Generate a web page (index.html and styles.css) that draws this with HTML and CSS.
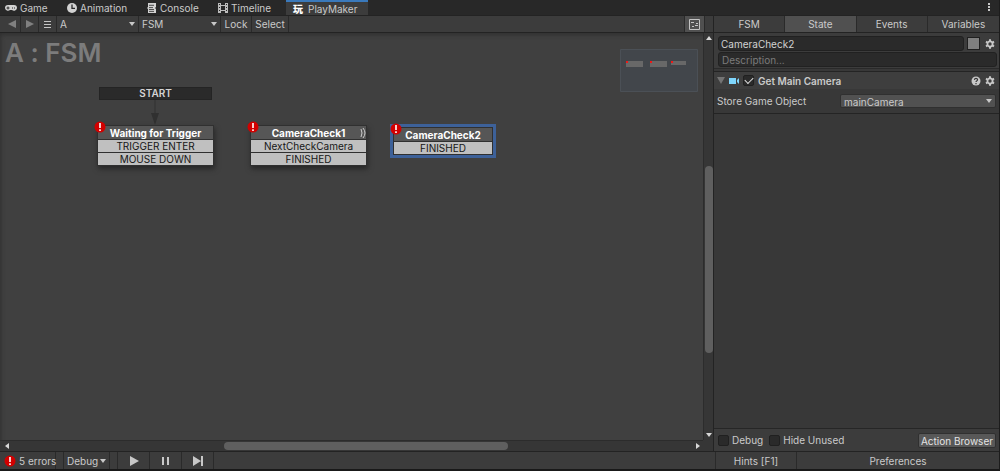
FILE: index.html
```html
<!DOCTYPE html>
<html lang="en">
<head>
<meta charset="utf-8">
<title>PlayMaker</title>
<link rel="stylesheet" href="styles.css">
</head>
<body>
<div class="editor">
  <nav class="tabs">
    <button class="tab tab-game"><svg width="12" height="10" viewBox="0 0 12 10"><path fill="#d2d2d2" fill-rule="evenodd" d="M3 2h6a3 3 0 0 1 3 3a3 3 0 0 1-5 2H5a3 3 0 0 1-5-2a3 3 0 0 1 3-3zM2.5 3.5v1h-1v1h1v1h1v-1h1v-1h-1v-1zM7 4.5v1h1v-1zM9 4.5v1h1v-1z"/></svg>Game</button>
    <button class="tab tab-animation"><svg width="10" height="10" viewBox="0 0 10 10"><circle cx="5" cy="5" r="5" fill="#d2d2d2"/><path d="M5 1.5V5.4H8" fill="none" stroke="#282828" stroke-width="1.3"/></svg>Animation</button>
    <button class="tab tab-console"><svg width="10" height="10" viewBox="0 0 10 10"><path fill="#d2d2d2" d="M1 0h8v4l-1 1 1 1v4H1V6l-1-1 1-1z"/><path d="M2 2.300h5M2 4.600h4M2 6.500h5M2 8.400h5" stroke="#282828" stroke-width=".8"/></svg>Console</button>
    <button class="tab tab-timeline"><svg width="10" height="10" viewBox="0 0 10 10"><path d="M0 0h3v2h4V0h3v10H7V8H3v2H0zM3 3v4h4V3z" fill="#bcbcbc" fill-rule="evenodd"/><path d="M1 1.500h1M1 4.500h1M1 7.500h1M8 1.500h1M8 4.500h1M8 7.500h1" stroke="#282828"/></svg>Timeline</button>
    <button class="tab tab-active"><span class="logo">玩</span>PlayMaker</button>
    <button class="menu" aria-label="Window menu"><svg width="4" height="10" viewBox="0 0 4 10"><path fill="#c8c8c8" d="M1 0h2v2H1zM1 3h2v2H1zM1 6h2v2H1z"/></svg></button>
  </nav>

  <main class="workspace">
    <section class="graph">
      <div class="toolbar">
        <button class="tool" aria-label="Back"><svg width="10" height="8" viewBox="0 0 10 8"><path d="M9 0v8L1 4z" fill="#808080"/></svg></button>
        <button class="tool" aria-label="Forward"><svg width="10" height="8" viewBox="0 0 10 8"><path d="M1 0v8l8-4z" fill="#808080"/></svg></button>
        <button class="tool" aria-label="Recent"><svg width="7" height="7" viewBox="0 0 7 7"><path d="M0 .5h7M0 3.500h7M0 6.500h7" stroke="#c4c4c4"/></svg></button>
        <span class="picker"><select aria-label="Object"><option>A</option></select></span>
        <span class="picker"><select aria-label="FSM"><option>FSM</option></select></span>
        <button class="tool tool-lock">Lock</button>
        <button class="tool tool-select">Select</button>
        <span class="spacer"></span>
        <button class="tool tool-map" aria-label="Minimap"><svg width="11" height="11" viewBox="0 0 11 11"><path d="M.5.5h10v10H.5z" fill="none" stroke="#c4c4c4"/><path d="M2 3.500h3M7 4.500h2M3 7.500h2M6 6.500h3" stroke="#c4c4c4"/></svg></button>
      </div>
      <div class="viewport">
        <div class="canvas">
          <h1 class="title">A : FSM</h1>
          <svg class="link" width="10" height="26" viewBox="0 0 10 26"><path d="M5 0v15" stroke="#303030"/><path d="M1 13h8L5 25z" fill="#303030"/></svg>
          <div class="start">START</div>
          <article class="node node-waiting">
            <svg class="error" width="12" height="12" viewBox="0 0 12 12"><circle cx="6" cy="6" r="5.500" fill="#d10000"/><path d="M6 2v5M6 8.300v1.700" stroke="#fff" stroke-width="1.600"/></svg>
            <h2>Waiting for Trigger</h2><p>TRIGGER ENTER</p><p>MOUSE DOWN</p>
          </article>
          <article class="node node-check1">
            <svg class="error" width="12" height="12" viewBox="0 0 12 12"><circle cx="6" cy="6" r="5.500" fill="#d10000"/><path d="M6 2v5M6 8.300v1.700" stroke="#fff" stroke-width="1.600"/></svg>
            <h2>CameraCheck1</h2><p>NextCheckCamera</p><p>FINISHED</p>
            <svg class="waves" width="6" height="12" viewBox="0 0 6 12"><path d="M1 2q2 4 0 8M3 1q4 5 0 10" fill="none" stroke="#ccc"/></svg>
          </article>
          <article class="node node-check2">
            <svg class="error" width="12" height="12" viewBox="0 0 12 12"><circle cx="6" cy="6" r="5.500" fill="#d10000"/><path d="M6 2v5M6 8.300v1.700" stroke="#fff" stroke-width="1.600"/></svg>
            <h2>CameraCheck2</h2><p>FINISHED</p>
          </article>
          <svg class="minimap" width="78" height="43" viewBox="0 0 78 43"><path d="M.5.5h77v42H.5z" fill="#42464b" stroke="#4b5056"/><path d="M6 12h17v6H6zM30 12h17v6H30zM51 12h15v4H51z" fill="#686868"/><path d="M6 12h2v2H6zM30 12h2v2h-2zM51 12h2v2h-2z" fill="#f01818"/></svg>
        </div>
        <div class="bar bar-v">
          <svg width="6" height="4" viewBox="0 0 6 4"><path d="M0 4h6L3 0z" fill="#d8d8d8"/></svg>
          <div class="track"><div class="thumb"></div></div>
          <svg width="6" height="4" viewBox="0 0 6 4"><path d="M0 0h6L3 4z" fill="#d8d8d8"/></svg>
        </div>
        <div class="bar bar-h">
          <svg width="4" height="6" viewBox="0 0 4 6"><path d="M4 0v6L0 3z" fill="#d8d8d8"/></svg>
          <div class="track"><div class="thumb"></div></div>
          <svg width="4" height="6" viewBox="0 0 4 6"><path d="M0 0v6l4-3z" fill="#d8d8d8"/></svg>
        </div>
        <div class="corner"></div>
      </div>
    </section>

    <aside class="inspector">
      <div class="modes">
        <button>FSM</button><button class="on">State</button><button>Events</button><button>Variables</button>
      </div>
      <div class="state">
        <div class="state-row">
          <input class="field" aria-label="State name" value="CameraCheck2">
          <button class="swatch" aria-label="State color"></button>
          <button class="icon" aria-label="State settings"><svg width="10" height="10" viewBox="0 0 10 10"><circle cx="5" cy="5" r="2.600" fill="none" stroke="#c8c8c8" stroke-width="1.800"/><path d="M5 .3v1.700M5 8v1.700M1 2.700l1.400.8M7.600 6.500l1.400.8M1 7.300l1.400-.8M7.600 3.500L9 2.700" stroke="#c8c8c8" stroke-width="2"/></svg></button>
        </div>
        <input class="field" aria-label="Description" placeholder="Description...">
      </div>
      <div class="action">
        <div class="action-head">
          <svg width="8" height="7" viewBox="0 0 8 7"><path d="M0 0h8L4 7z" fill="#747474"/></svg>
          <svg class="camera" width="10" height="8" viewBox="0 0 10 8"><path d="M0 1h7v6H0zM10 1v6L8 5V3z" fill="#7fd6fd"/></svg>
          <input type="checkbox" id="enabled" checked>
          <label for="enabled">Get Main Camera</label>
          <span class="spacer"></span>
          <button class="icon" aria-label="Help"><svg width="10" height="10" viewBox="0 0 10 10"><circle cx="5" cy="5" r="4.500" fill="#c8c8c8"/><path d="M3.400 3.800q.2-1.400 1.600-1.400t1.600 1.200q0 .8-.9 1.300-.7.400-.7 1.100M5 7v1.200" fill="none" stroke="#383838" stroke-width="1.200"/></svg></button>
          <button class="icon" aria-label="Action settings"><svg width="10" height="10" viewBox="0 0 10 10"><circle cx="5" cy="5" r="2.600" fill="none" stroke="#c8c8c8" stroke-width="1.800"/><path d="M5 .3v1.700M5 8v1.700M1 2.700l1.400.8M7.600 6.500l1.400.8M1 7.300l1.400-.8M7.600 3.500L9 2.700" stroke="#c8c8c8" stroke-width="2"/></svg></button>
        </div>
        <div class="property">
          <label for="store">Store Game Object</label>
          <span class="picker picker-value"><select id="store"><option>mainCamera</option></select></span>
        </div>
      </div>
      <div class="options">
        <input type="checkbox" id="debug"><label for="debug">Debug</label>
        <input type="checkbox" id="hide"><label for="hide">Hide Unused</label>
        <span class="spacer"></span>
        <button class="browse">Action Browser</button>
      </div>
    </aside>
  </main>

  <footer class="status">
    <div class="status-left">
      <button class="errors"><svg width="12" height="12" viewBox="0 0 12 12"><circle cx="6" cy="6" r="5.500" fill="#d10000"/><path d="M6 2v5M6 8.300v1.700" stroke="#fff" stroke-width="1.600"/></svg>5 errors</button>
      <span class="gap"></span>
      <span class="picker picker-debug"><select aria-label="Debug"><option>Debug</option></select></span>
      <span class="gap"></span>
      <button class="play" aria-label="Play"><svg width="10" height="10" viewBox="0 0 10 10"><path d="M1 0v10l9-5z" fill="#c8c8c8"/></svg></button>
      <button class="play" aria-label="Pause"><svg width="10" height="10" viewBox="0 0 10 10"><path d="M1 1h2v8H1zM6 1h2v8H6z" fill="#c8c8c8"/></svg></button>
      <button class="play" aria-label="Step"><svg width="12" height="10" viewBox="0 0 12 10"><path d="M1 0v10l8-5zM9 0h2v10H9z" fill="#c8c8c8"/></svg></button>
    </div>
    <div class="status-right">
      <button class="hints">Hints [F1]</button>
      <button class="prefs">Preferences</button>
    </div>
  </footer>
</div>
</body>
</html>
```
FILE: styles.css
```css
* { box-sizing: border-box; }
body { margin: 0; font: 10px/14px Inter, "Noto Sans CJK SC", sans-serif; color: #cacaca; background: #383838; }
button, input, select { font: inherit; color: inherit; margin: 0; padding: 0; border: 0; border-radius: 0; background: none; white-space: nowrap; }
h1, h2, p { margin: 0; }
svg { display: block; flex: none; }
.spacer { flex: 1; }

.editor { display: flex; flex-direction: column; min-height: 100vh; border-right: 1px solid #1c1c1c; border-bottom: 2px solid #191919; }

.tabs { display: flex; height: 16px; background: #282828; border-bottom: 1px solid #232323; }
.tab { display: flex; align-items: center; gap: 3px; padding: 1px 0 0 5px; }
.tab-game { width: 62px; }
.tab-animation { width: 80px; }
.tab-console { width: 71px; }
.tab-timeline { width: 73px; }
.tab-active { width: 82px; gap: 5px; padding: 0 0 0 7px; background: #3c3c3c; border-top: 2px solid #3a79bb; }
.logo { font: 900 10px/12px "Noto Sans CJK SC", sans-serif; color: #fff; }
.menu { margin-left: auto; padding: 0 8px; }

.workspace { display: flex; flex: 1; }
.graph { display: flex; flex-direction: column; flex: 1; min-width: 0; }
.toolbar { display: flex; height: 17px; padding: 0 8px 0 3px; background: #3c3c3c; border-bottom: 1px solid #232323; }
.tool { display: grid; place-items: center; width: 18px; border-right: 1px solid #2a2a2a; }
.tool-lock { width: 31px; }
.tool-select { width: 37px; }
.tool-map { width: 21px; background: #505050; border-left: 1px solid #2a2a2a; }

.picker { position: relative; display: flex; width: 82px; border-right: 1px solid #2a2a2a; }
.picker select { appearance: none; width: 100%; padding-left: 3px; }
.picker::after { content: ""; position: absolute; right: 3px; top: 50%; margin-top: -2px; border: 3px solid transparent; border-top: 4px solid #c8c8c8; border-bottom: 0; pointer-events: none; }

.viewport { display: grid; flex: 1; grid-template: 1fr 11px / 1fr 10px; }
.canvas { position: relative; overflow: hidden; background: #404040; box-shadow: inset 3px 4px 4px -2px #303030; }
.title { padding: 4px 5px; font-size: 26px; line-height: 32px; font-weight: 600; font-feature-settings: "calt" 0; color: #7c7c7c; }
.start { position: absolute; left: 99px; top: 54px; width: 113px; height: 13px; background: #2a2a2a; color: #d4d4d4; font-weight: 600; text-align: center; border: 1px solid #242424; line-height: 11px; }
.link { position: absolute; left: 150px; top: 67px; }
.node { position: absolute; width: 117px; padding: 1px; background: #303030; box-shadow: 1px 3px 5px #282828; text-align: center; }
.node h2 { height: 13px; font-size: 10px; line-height: 14px; font-weight: 700; color: #fff; background: #565656; }
.node p { height: 12px; margin-top: 1px; line-height: 12px; color: #161616; background: #c0c0c0; }
.node-waiting { left: 97px; top: 92px; }
.node-check1 { left: 250px; top: 92px; }
.node-check2 { left: 393px; top: 94px; width: 100px; box-shadow: 0 0 0 3px #3d6199; }
.error { position: absolute; left: -3px; top: -4px; }
.waves { position: absolute; right: 1px; top: 2px; }
.minimap { position: absolute; right: 5px; top: 16px; }

.bar { display: flex; align-items: center; background: #363636; }
.bar-v { flex-direction: column; padding: 3px 0 3px; border-left: 1px solid #2c2c2c; }
.bar-h { padding: 0 3px 0 5px; border-top: 1px solid #2c2c2c; }
.track { display: flex; flex: 1; }
.bar-v .track { flex-direction: column; padding: 126px 0 80px; }
.bar-h .track { padding: 0 27% 0 31%; }
.thumb { flex: 1; min-width: 8px; min-height: 8px; border-radius: 4px; background: #5f5f5f; }
.corner { background: #363636; }

.inspector { display: flex; flex-direction: column; width: 286px; background: #383838; border-left: 1px solid #232323; }
.modes { display: grid; grid-template-columns: repeat(4, 1fr); height: 17px; background: #3c3c3c; border-bottom: 1px solid #232323; }
.modes button { border-right: 1px solid #2a2a2a; }
.modes button:last-child { border-right: 0; }
.modes .on { background: #505050; }
.state { display: flex; flex-direction: column; gap: 1px; padding: 3px 2px 1px 4px; background: #3c3c3c; border-bottom: 1px solid #2a2a2a; }
.state-row { display: flex; align-items: center; gap: 3px; }
.field { flex: 1; min-width: 0; height: 15px; padding: 0 2px; border: 1px solid #212121; border-radius: 3px; background: #2a2a2a; color: #d2d2d2; }
.state > .field { flex: none; padding: 0 3px; }
.field::placeholder { color: #7b7b7b; opacity: 1; }
.swatch { width: 13px; height: 13px; border: 1px solid #202020; background: #808080; }
.icon { display: grid; place-items: center; width: 14px; height: 14px; }

.action { margin-top: 2px; border-top: 1px solid #242424; border-bottom: 1px solid #242424; }
.action-head { display: flex; align-items: center; height: 17px; padding: 0 2px 0 3px; background: #3e3e3e; font-weight: 600; }
.camera { margin: 0 4px; }
.action-head label { padding-left: 4px; }
input[type="checkbox"] { appearance: none; display: grid; place-items: center; width: 11px; height: 11px; border: 1px solid #202020; border-radius: 2px; background: #2a2a2a; }
input[type="checkbox"]:checked::after { content: ""; width: 7px; height: 4px; margin-top: -2px; border: solid #e0e0e0; border-width: 0 0 1px 1px; rotate: -45deg; }
.property { display: flex; align-items: center; justify-content: space-between; height: 24px; padding: 0 3px; }
.picker-value { width: 156px; height: 14px; border: 1px solid #303030; border-radius: 2px; background: #515151; }
.options { display: flex; align-items: center; gap: 3px; height: 23px; margin-top: auto; padding: 0 3px 0 4px; background: #3c3c3c; border-top: 1px solid #262626; }
.options label { margin-right: 3px; }
.browse { height: 15px; padding: 0 2px; border: 1px solid #303030; border-radius: 2px; background: #585858; color: #e4e4e4; }

.status { display: flex; height: 18px; background: #3c3c3c; border-top: 1px solid #232323; }
.status-left { display: flex; flex: 1; }
.status-right { display: flex; width: 284px; border-left: 1px solid #2a2a2a; }
.errors { display: flex; align-items: center; gap: 3px; width: 56px; padding-left: 4px; border-right: 1px solid #2a2a2a; }
.gap { width: 8px; border-right: 1px solid #2a2a2a; }
.picker-debug { width: 46px; }
.play { display: grid; place-items: center; width: 32px; border-right: 1px solid #2a2a2a; }
.hints { width: 81px; border-right: 1px solid #2a2a2a; }
.prefs { flex: 1; }
```
